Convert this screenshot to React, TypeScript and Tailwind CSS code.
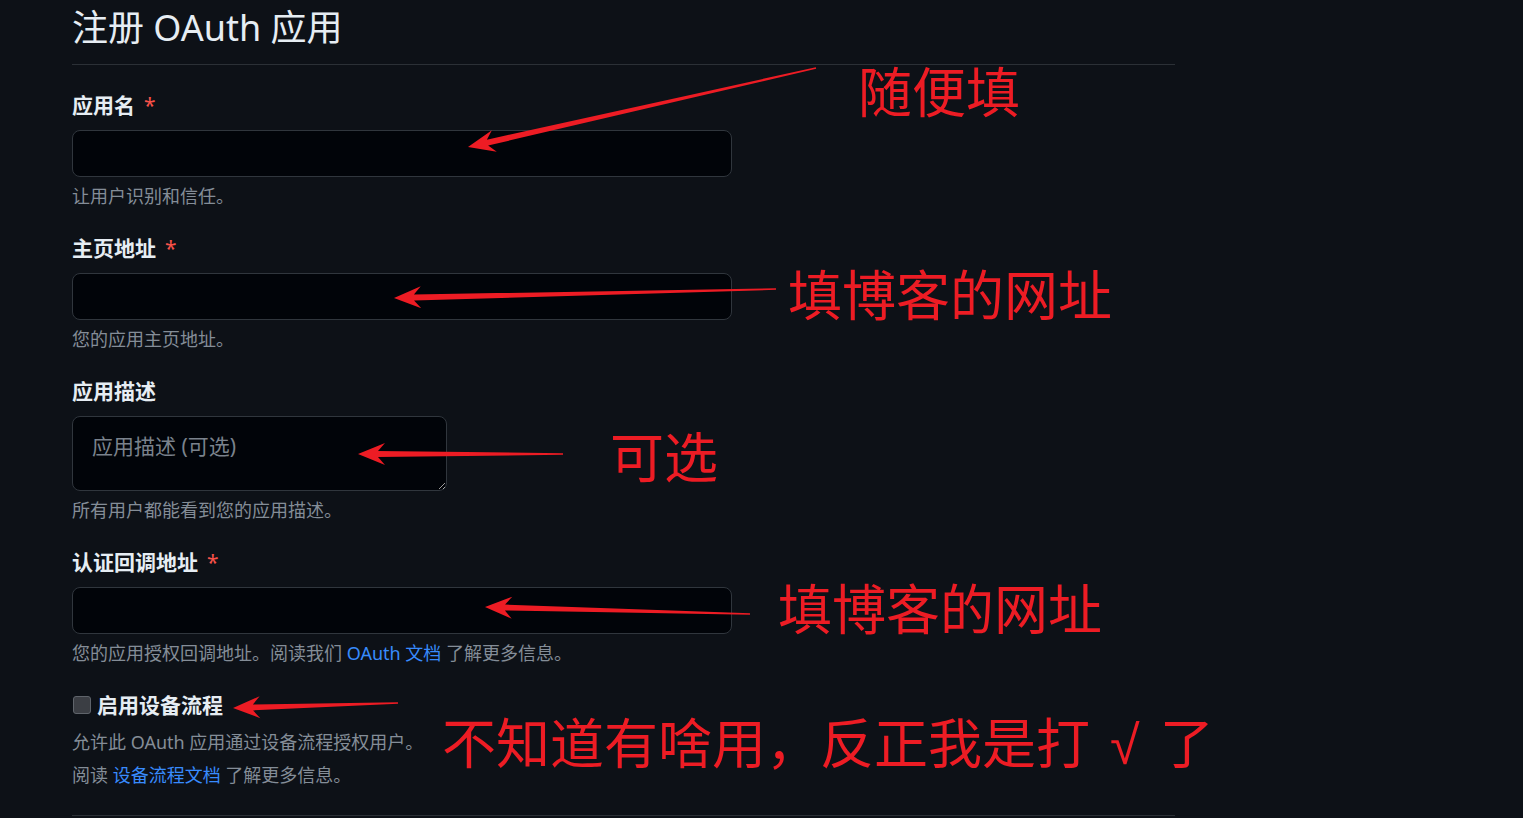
import type { ReactNode } from "react";

type Pt = [number, number];

// tapered red arrow, like a paint-tool annotation
function arrowPoints(tail: Pt, tip: Pt, head = 25, half = 11, neck = 3, end = 0.8) {
  const dx = tail[0] - tip[0];
  const dy = tail[1] - tip[1];
  const len = Math.hypot(dx, dy);
  const ux = dx / len;
  const uy = dy / len;
  const nx = -uy;
  const ny = ux;
  const at = (d: number, w: number): Pt => [tip[0] + ux * d + nx * w, tip[1] + uy * d + ny * w];
  const pts: Pt[] = [
    tip,
    at(head + 2, half),
    at(head - 5, neck),
    [tail[0] + nx * end, tail[1] + ny * end],
    [tail[0] - nx * end, tail[1] - ny * end],
    at(head - 5, -neck),
    at(head + 2, -half),
  ];
  return pts.map((p) => p.join(",")).join(" ");
}

const arrows: { tail: Pt; tip: Pt }[] = [
  { tail: [816, 68], tip: [468, 147] },
  { tail: [776, 289], tip: [394, 298] },
  { tail: [563, 454], tip: [358, 454] },
  { tail: [750, 614], tip: [485, 607] },
  { tail: [398, 703], tip: [233, 708] },
];

const notes: { text: ReactNode; className: string }[] = [
  { text: "随便填", className: "left-[858px] top-[63px]" },
  { text: "填博客的网址", className: "left-[788px] top-[266px]" },
  { text: "可选", className: "left-[610px] top-[428px]" },
  { text: "填博客的网址", className: "left-[778px] top-[580px]" },
  {
    text: (
      <>
        不知道有啥用，反正我是打 <span className="mx-[8px] font-['Liberation_Sans',sans-serif]">√</span> 了
      </>
    ),
    className: "left-[442px] top-[714px]",
  },
];

function Field({
  label,
  required,
  note,
  children,
}: {
  label: string;
  required?: boolean;
  note: ReactNode;
  children: ReactNode;
}) {
  return (
    <div className="mt-[26px]">
      <div className="text-[21px] leading-[28px] font-bold">
        {label}
        {required && <span className="ml-[9px] font-normal text-[#f85149]">*</span>}
      </div>
      <div className="mt-[11px]">{children}</div>
      <p className="mt-[7px] text-[18px] leading-[24px] text-[#848d97]">{note}</p>
    </div>
  );
}

function TextInput() {
  return (
    <input
      type="text"
      className="block h-[47px] w-[660px] rounded-[8px] border border-[#30363d] bg-[#010409] px-[18px] text-[21px] outline-none"
    />
  );
}

export default function App() {
  return (
    <div className="relative min-h-screen overflow-hidden bg-[#0d1117] font-['Noto_Sans','Noto_Sans_CJK_SC',sans-serif] text-[#e6edf3]">
      <div className="ml-[72px] w-[1103px]">
        <div className="border-b border-[#2b3036] pt-[4px] pb-[12px]">
          <h1 className="text-[36px] leading-[48px] font-normal">注册 OAuth 应用</h1>
        </div>

        <Field label="应用名" required note="让用户识别和信任。">
          <TextInput />
        </Field>

        <Field label="主页地址" required note="您的应用主页地址。">
          <TextInput />
        </Field>

        <Field label="应用描述" note="所有用户都能看到您的应用描述。">
          <textarea
            placeholder="应用描述 (可选)"
            className="block h-[75px] w-[375px] rounded-[8px] border border-[#30363d] bg-[#010409] px-[19px] pt-[17px] text-[21px] leading-[24px] outline-none placeholder:text-[#7a828c]"
          />
        </Field>

        <Field
          label="认证回调地址"
          required
          note={
            <>
              您的应用授权回调地址。阅读我们 <span className="text-[#388bfd]">OAuth 文档</span> 了解更多信息。
            </>
          }
        >
          <TextInput />
        </Field>

        <div className="mt-[26px] flex items-center">
          <span className="ml-[1px] h-[18px] w-[18px] shrink-0 rounded-[3px] border border-[#5f646b] bg-[#3b3e44]" />
          <span className="ml-[6px] text-[21px] leading-[28px] font-bold">启用设备流程</span>
        </div>
        <div className="mt-[7px] text-[18px] leading-[33px] text-[#848d97]">
          <p>允许此 OAuth 应用通过设备流程授权用户。</p>
          <p>
            阅读 <span className="text-[#388bfd]">设备流程文档</span> 了解更多信息。
          </p>
        </div>
        <div className="mt-[23px] border-t border-[#2b3036]" />
      </div>

      <svg className="pointer-events-none absolute left-0 top-0" width="1523" height="818">
        {arrows.map((a, i) => (
          <polygon key={i} points={arrowPoints(a.tail, a.tip)} fill="#ed1c24" />
        ))}
      </svg>

      {notes.map((n, i) => (
        <div
          key={i}
          className={`absolute whitespace-nowrap font-['Noto_Sans_CJK_SC',sans-serif] text-[54px] leading-[54px] text-[#ed1c24] ${n.className}`}
        >
          {n.text}
        </div>
      ))}
    </div>
  );
}
